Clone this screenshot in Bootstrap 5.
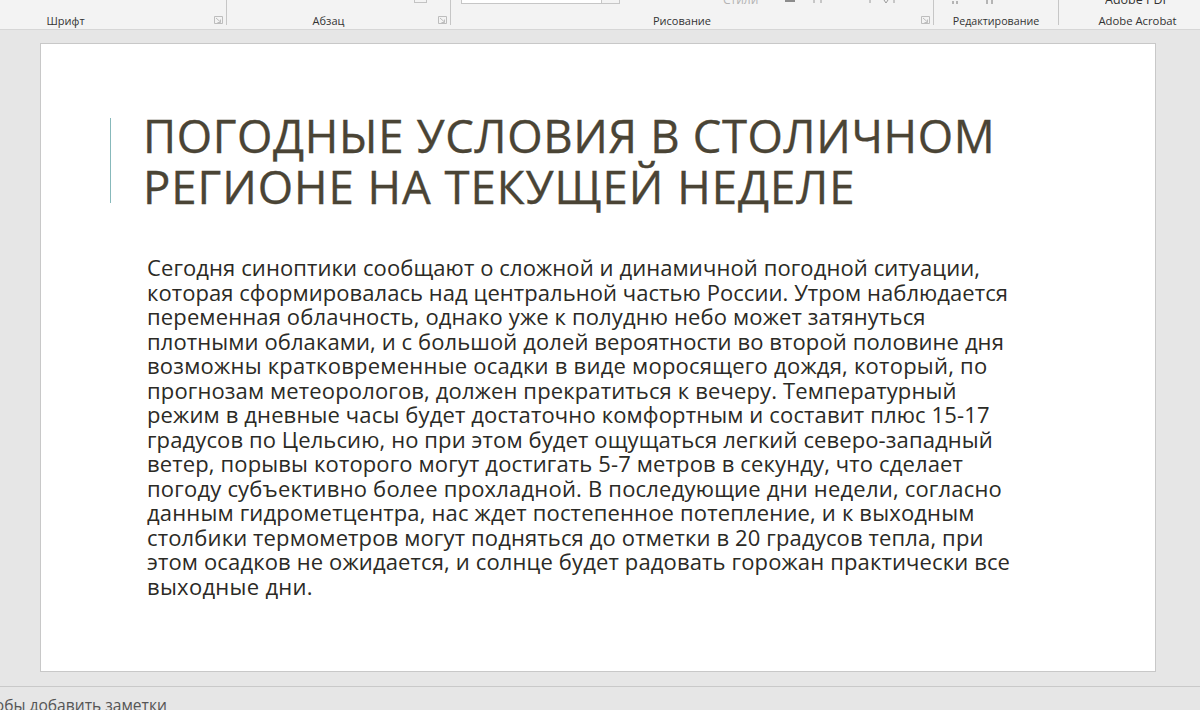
<!DOCTYPE html>
<html lang="ru"><head><meta charset="utf-8">
<link href="https://cdn.jsdelivr.net/npm/bootstrap@5.3.0/dist/css/bootstrap.min.css" rel="stylesheet">
<style>
html,body{height:710px;overflow:hidden;background:#e6e6e6}
.app-shell{height:710px;width:1200px;overflow:hidden}
.ribbon{height:30px;flex:none;background:#f3f3f3;border-bottom:1px solid #d6d6d6;font:11px/12px "Open Sans",sans-serif;color:#333;overflow:hidden}
.rgroup{height:25px;border-right:1px solid #c6c6c6;flex:none;position:relative}
.g1{width:227px}.g2{width:224px}.g3{width:483px}.g4{width:125px}.g5{width:141px;border-right:0}
.rtop{height:15px;display:flex;align-items:flex-start}
.rlabel{text-align:center;white-space:nowrap;height:12px}
.g1 .rlabel{padding-right:95px}.g2 .rlabel{padding-right:20px}.g3 .rlabel{padding-right:20px}.g4 .rlabel{font-size:10.7px}.g5 .rlabel{padding-left:16px;font-size:11.3px}
.launcher{position:absolute;right:3px;bottom:1px;width:9px;height:8px;line-height:0}
.tiny-box{margin-left:187px;width:13px;height:3px;border:1px solid #c3c3c3;border-top:0}
.combo{margin-left:10px;width:159px;height:4px;background:#fff;border:1px solid #c6c6c6;border-top:0;display:flex;justify-content:flex-end}
.combo i{display:block;width:18px;background:#f3f3f3;border-left:1px solid #c6c6c6}
.clip-text{height:6px;display:flex;align-items:flex-end;overflow:hidden;white-space:nowrap}
.styles-text{margin-left:103px;width:50px;color:#b4b4b4;font-size:12px}
.pdf-text{margin-left:46px;color:#333;font-size:12.5px}
.ticks{display:block;margin-left:12px}
.ticks-ed{display:block;margin-left:18px}
.stage{flex:1 1 auto;padding:13px 44px 0 40px}
.slide{width:1116px;height:629px;background:#fff;border:1px solid #c8c8c8}
.title-block{margin:74px 0 0 69px;padding-left:32px;border-left:1px solid #87b9bb;height:85px;display:flex;align-items:center}
.slide-title{font:400 45.5px/51px "Open Sans",sans-serif;color:#4a4435;margin:0;white-space:nowrap;-webkit-text-stroke:.35px #4a4435}
.slide-title span{display:block;letter-spacing:.62px}
.slide-title span:last-child{letter-spacing:.95px}
.slide-body{margin:52px 0 0 106px;width:890px;font:400 22px/24.5px "Open Sans",sans-serif;letter-spacing:.14px;color:#2b2a25}
.slide-body span{display:block;white-space:nowrap}
.slide-body span:nth-child(1){letter-spacing:.1px}
.slide-body span:nth-child(2){letter-spacing:.06px}
.slide-body span:nth-child(4){letter-spacing:.1px}
.slide-body span:nth-child(5){letter-spacing:.24px}
.slide-body span:nth-child(8){letter-spacing:.11px}
.slide-body span:nth-child(10){letter-spacing:.2px}
.slide-body span:nth-child(11){letter-spacing:.17px}
.slide-body span:nth-child(14){letter-spacing:.29px}
.notes{height:24px;flex:none;border-top:1px solid #c9c9c9;background:#e6e6e6;font:15.6px/1 "Open Sans",sans-serif;color:#555;padding-top:11px;white-space:nowrap;overflow:hidden}
.notes span{display:block;margin-left:-22px}
</style></head>
<body>
<div class="app-shell d-flex flex-column">
  <div class="ribbon d-flex">
    <div class="rgroup g1"><div class="rtop"></div><div class="rlabel">Шрифт</div>
      <span class="launcher"><svg width="9" height="8" viewBox="0 0 9 8"><path d="M.5.5h8v7h-8zM2 2l4.500 4M6.500 3.500v3h-3" fill="none" stroke="#bdbdbd"/></svg></span></div>
    <div class="rgroup g2"><div class="rtop"><div class="tiny-box"></div></div><div class="rlabel">Абзац</div>
      <span class="launcher"><svg width="9" height="8" viewBox="0 0 9 8"><path d="M.5.5h8v7h-8zM2 2l4.500 4M6.500 3.500v3h-3" fill="none" stroke="#bdbdbd"/></svg></span></div>
    <div class="rgroup g3"><div class="rtop"><div class="combo"><i></i></div><div class="clip-text styles-text">Стили</div>
      <svg class="ticks" width="120" height="6" viewBox="0 0 120 6"><path d="M0 0h10v2H0z" fill="#8c8c8c"/><path d="M29 0v3M36 0v3M85 0v3M99 0l2 3 2-3M109 0v3" stroke="#9a9a9a" fill="none"/></svg></div>
      <div class="rlabel">Рисование</div>
      <span class="launcher"><svg width="9" height="8" viewBox="0 0 9 8"><path d="M.5.5h8v7h-8zM2 2l4.500 4M6.500 3.500v3h-3" fill="none" stroke="#bdbdbd"/></svg></span></div>
    <div class="rgroup g4"><div class="rtop"><svg class="ticks-ed" width="46" height="6" viewBox="0 0 46 6"><path d="M1 1v3M5 1v3M35 0v4M40 0v4" stroke="#777" fill="none"/></svg></div><div class="rlabel">Редактирование</div></div>
    <div class="rgroup g5"><div class="rtop"><div class="clip-text pdf-text">Adobe PDF</div></div><div class="rlabel">Adobe Acrobat</div></div>
  </div>
  <div class="stage">
    <div class="slide">
      <div class="title-block"><h1 class="slide-title"><span>ПОГОДНЫЕ УСЛОВИЯ В СТОЛИЧНОМ</span><span>РЕГИОНЕ НА ТЕКУЩЕЙ НЕДЕЛЕ</span></h1></div>
      <div class="slide-body">
<span>Сегодня синоптики сообщают о сложной и динамичной погодной ситуации,</span>
<span>которая сформировалась над центральной частью России. Утром наблюдается</span>
<span>переменная облачность, однако уже к полудню небо может затянуться</span>
<span>плотными облаками, и с большой долей вероятности во второй половине дня</span>
<span>возможны кратковременные осадки в виде моросящего дождя, который, по</span>
<span>прогнозам метеорологов, должен прекратиться к вечеру. Температурный</span>
<span>режим в дневные часы будет достаточно комфортным и составит плюс 15-17</span>
<span>градусов по Цельсию, но при этом будет ощущаться легкий северо-западный</span>
<span>ветер, порывы которого могут достигать 5-7 метров в секунду, что сделает</span>
<span>погоду субъективно более прохладной. В последующие дни недели, согласно</span>
<span>данным гидрометцентра, нас ждет постепенное потепление, и к выходным</span>
<span>столбики термометров могут подняться до отметки в 20 градусов тепла, при</span>
<span>этом осадков не ожидается, и солнце будет радовать горожан практически все</span>
<span>выходные дни.</span>
      </div>
    </div>
  </div>
  <div class="notes"><span>чтобы добавить заметки</span></div>
</div>
<script src="https://cdn.jsdelivr.net/npm/bootstrap@5.3.0/dist/js/bootstrap.bundle.min.js"></script>
</body></html>
